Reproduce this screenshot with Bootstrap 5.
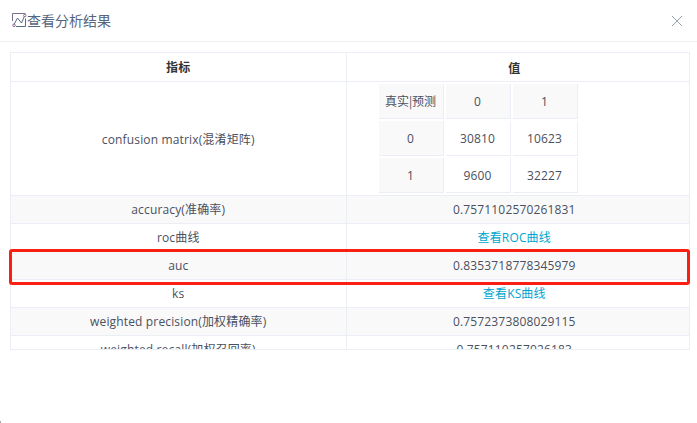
<!DOCTYPE html>
<html lang="zh-CN">
<head>
<meta charset="utf-8">
<title>查看分析结果</title>
<link href="https://cdn.jsdelivr.net/npm/bootstrap@5.3.0/dist/css/bootstrap.min.css" rel="stylesheet">
<style>
html,body{height:100%;background:#fff;overflow:hidden}
body{font-family:"Open Sans","Noto Sans CJK SC",sans-serif;font-size:12px;color:#495060;letter-spacing:.15px;position:relative}
.dlg-head{height:42px;padding:0 14px 0 12px;border-bottom:1px solid #eceef2}
.dlg-title{font-size:14px;line-height:20px;color:#55657d;font-weight:400;letter-spacing:0}
.dlg-close{width:12px;height:12px;padding:0;border:0;background:none;line-height:0}
.dlg-body{padding:10px 7px 0 10px;position:relative}
.result-wrap{height:298px;overflow:hidden;border:1px solid #ebeef5}
.result-table{width:100%;table-layout:fixed;margin:0;border-collapse:collapse}
.result-table>*>tr>*{height:28px;padding:2px 7px 0 0;text-align:center;vertical-align:middle;border-bottom:1px solid #ebeef5;background:#fff;color:#495060;box-shadow:none;font-weight:400;line-height:18px}
.result-table>*>tr>*:first-child{width:335px;padding:2px 0 0;border-right:1px solid #ebeef5}
.result-table>thead>tr>th{font-weight:700;color:#333;padding-top:5px}
.result-table>tbody>tr.shade>td{background:#f9f9f9}
.result-table>tbody>tr.mx>td{height:114px}
.result-table>tbody>tr.mx>td:first-child{padding-top:3px}
.result-table>tbody>tr.mx>td:last-child{padding-top:0}
.result-table a{color:#00a5cf;text-decoration:none}
.matrix{border-collapse:separate;border-spacing:2px;margin-left:30px;table-layout:fixed;width:203px}
.matrix td{height:35px;padding:2px 0 0;text-align:center;vertical-align:middle;border-right:1px solid #ebeef5;border-bottom:1px solid #ebeef5;background:#fff;color:#495060;line-height:16px}
.matrix td.hd{background:#f9f9f9}
.matrix td.corner{font-family:"Noto Sans CJK SC",sans-serif;letter-spacing:0;padding-top:0}
.highlight{position:absolute;left:9px;top:207px;width:681px;height:36px;border:3px solid #fa1f13;border-radius:3px;pointer-events:none}
.corner-dot{position:absolute;left:0;bottom:0;width:1px;height:2px;background:#aaa}
</style>
</head>
<body>
<div class="d-flex flex-column h-100">
  <div class="dlg-head d-flex align-items-center justify-content-between">
    <div class="dlg-title d-flex align-items-center">
      <svg width="15" height="15" viewBox="0 0 15 15" fill="none" stroke="#5b6b86" stroke-width="1" aria-hidden="true">
        <path d="M.5 8V.5H13.500" stroke="#7d6d8e"/>
        <path d="M13.500 5.500V13.500H4"/>
        <path d="M2 11.500 5.500 5 9.500 10 12.500 3"/>
        <circle cx="2" cy="12.300" r="1.300" stroke="#8a6d8e"/>
        <circle cx="12.800" cy="2.500" r="1.200" stroke="#8a6d8e"/>
      </svg>
      <span>查看分析结果</span>
    </div>
    <button type="button" class="dlg-close" aria-label="关闭">
      <svg width="12" height="12" viewBox="0 0 12 12" stroke="#9aa3b0" stroke-width="1" fill="none"><path d="M1 1 11 11M11 1 1 11"/></svg>
    </button>
  </div>
  <div class="dlg-body">
    <div class="result-wrap">
      <table class="table result-table">
        <thead>
          <tr><th>指标</th><th>值</th></tr>
        </thead>
        <tbody>
          <tr class="mx">
            <td>confusion matrix(混淆矩阵)</td>
            <td>
              <table class="matrix">
                <tr><td class="hd corner">真实|预测</td><td class="hd">0</td><td class="hd">1</td></tr>
                <tr><td class="hd">0</td><td>30810</td><td>10623</td></tr>
                <tr><td class="hd">1</td><td>9600</td><td>32227</td></tr>
              </table>
            </td>
          </tr>
          <tr class="shade"><td>accuracy(准确率)</td><td>0.7571102570261831</td></tr>
          <tr><td>roc曲线</td><td><a href="#">查看ROC曲线</a></td></tr>
          <tr class="shade"><td>auc</td><td>0.8353718778345979</td></tr>
          <tr><td>ks</td><td><a href="#">查看KS曲线</a></td></tr>
          <tr class="shade"><td>weighted precision(加权精确率)</td><td>0.7572373808029115</td></tr>
          <tr><td>weighted recall(加权召回率)</td><td>0.757110257026183</td></tr>
        </tbody>
      </table>
    </div>
    <div class="highlight"></div>
  </div>
</div>
<div class="corner-dot"></div>
</body>
</html>
